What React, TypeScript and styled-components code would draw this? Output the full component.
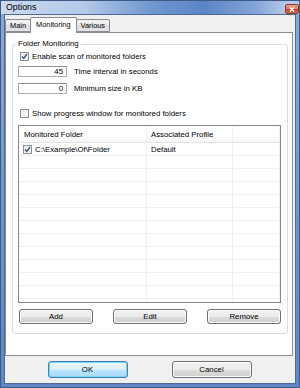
import styled, { createGlobalStyle } from 'styled-components'

const GlobalStyle = createGlobalStyle`
  html, body { margin: 0; padding: 0; background: #fff; }
  body { font-family: "Liberation Sans", Arial, sans-serif; }
  * { box-sizing: border-box; }
`

const FONT = '7.8px'

const Window = styled.div`
  width: 300px;
  height: 388px;
  display: flex;
  flex-direction: column;
  border: 1px solid #3d5a85;
  background: linear-gradient(180deg, #89abdc 0%, #6c92cf 60%, #5f86c6 100%);
`

const TitleBar = styled.div`
  height: 13px;
  flex: none;
  display: flex;
  align-items: center;
  justify-content: space-between;
  padding: 0 0 0 5px;
  background: linear-gradient(90deg, #cbdaef 0%, #b3c9e8 28%, #7098d0 50%, #5a85c6 68%, #82a4d6 85%, #b5cae8 96%);
`

const Title = styled.span`
  font-size: 8.8px;
  color: #000;
  line-height: 13px;
`

const CloseButton = styled.div`
  width: 14px;
  height: 10px;
  margin-top: 3px;
  border: 1px solid #8b3b2b;
  border-radius: 2px;
  background: linear-gradient(180deg, #eca58f 0%, #dc7a5e 45%, #c9472b 55%, #d86a4c 100%);
  display: flex;
  align-items: center;
  justify-content: center;
`

const Frame = styled.div`
  flex: 1;
  min-height: 0;
  display: flex;
  padding: 0 3px 3px 3px;
`

const Client = styled.div`
  flex: 1;
  min-height: 0;
  display: flex;
  flex-direction: column;
  border: 1px solid #4d6a96;
  background: #f0f0f0;
  padding: 2px 1px 0 0;
`

const TabRow = styled.div`
  display: flex;
  align-items: flex-end;
  height: 15px;
  flex: none;
  position: relative;
  z-index: 1;
`

const Tab = styled.div<{ $active?: boolean }>`
  height: ${(p) => (p.$active ? '16px' : '13px')};
  margin: ${(p) => (p.$active ? '0 -1px -1px -1px' : '0')};
  padding: ${(p) => (p.$active ? '2px 5px 0 5px' : '1px 4px 0 4px')};
  white-space: nowrap;
  border: 1px solid #898c95;
  border-bottom: ${(p) => (p.$active ? 'none' : '1px solid #898c95')};
  border-radius: 2px 2px 0 0;
  background: ${(p) => (p.$active ? '#fff' : 'linear-gradient(180deg, #f3f3f3 0%, #ebebeb 50%, #dedede 50%, #e4e4e4 100%)')};
  font-size: 7.4px;
  line-height: 10px;
  color: #000;
  position: relative;
  z-index: ${(p) => (p.$active ? 2 : 1)};
`

const Panel = styled.div`
  flex: 1;
  min-height: 0;
  display: flex;
  border: 1px solid #898c95;
  background: #fff;
  padding: 6px 4px 21px 6px;
  margin-right: 1px;
`

const Group = styled.fieldset`
  flex: 1;
  margin: 0;
  min-width: 0;
  min-height: 0;
  border: 1px solid #d5dfe5;
  border-radius: 3px;
  padding: 0 6px 9px 5px;
  display: flex;
`

const Legend = styled.legend`
  font-size: ${FONT};
  line-height: 10px;
  padding: 0 2px;
  margin-left: -2px;
  color: #000;
`

const GroupBody = styled.div`
  flex: 1;
  min-height: 0;
  display: flex;
  flex-direction: column;
`

const CheckRow = styled.div<{ $top: number }>`
  display: flex;
  align-items: center;
  gap: 3px;
  height: 10px;
  flex: none;
  margin-top: ${(p) => p.$top}px;
  padding-left: 2px;
  font-size: ${FONT};
  color: #000;
`

const Box = styled.span`
  width: 9px;
  height: 9px;
  flex: none;
  border: 1px solid #8e8f8f;
  background: linear-gradient(135deg, #dcdcdc 0%, #f4f4f4 60%, #ffffff 100%);
  box-shadow: inset 0 0 0 1px #f4f4f4;
  display: flex;
  align-items: center;
  justify-content: center;
`

const InputRow = styled.div<{ $top: number }>`
  display: flex;
  align-items: center;
  flex: none;
  margin-top: ${(p) => p.$top}px;
  height: 11px;
  font-size: ${FONT};
  color: #000;
`

const TextBox = styled.div`
  width: 49px;
  height: 11px;
  border: 1px solid #abadb3;
  border-top-color: #8e9199;
  background: #fff;
  text-align: right;
  padding-right: 3px;
  line-height: 9px;
  margin-right: 7px;
`

const List = styled.div`
  flex: 1;
  min-height: 0;
  margin-top: 7px;
  border: 1px solid #828790;
  background: #fff;
  overflow: hidden;
  display: flex;
  flex-direction: column;
`

const ListRow = styled.div<{ $header?: boolean }>`
  display: grid;
  grid-template-columns: 128px 86px 1fr;
  height: ${(p) => (p.$header ? '17px' : '13px')};
  flex: none;
  border-bottom: 1px solid ${(p) => (p.$header ? '#e2e3e5' : '#f0f0f0')};
  background: ${(p) => (p.$header ? 'linear-gradient(180deg, #ffffff 0%, #ffffff 50%, #f6f7f8 100%)' : '#fff')};
  font-size: ${FONT};
  color: #000;
`

const Cell = styled.div<{ $pad: number }>`
  display: flex;
  align-items: center;
  gap: 3px;
  padding-left: ${(p) => p.$pad}px;
  border-right: 1px solid #f0f0f0;
  white-space: nowrap;
  overflow: hidden;
`

const ButtonRow = styled.div`
  display: flex;
  flex: none;
  justify-content: space-between;
  margin-top: 6px;
  padding-left: 1px;
`

const Button = styled.div<{ $w: number; $h: number; $default?: boolean }>`
  width: ${(p) => p.$w}px;
  height: ${(p) => p.$h}px;
  border: 1px solid ${(p) => (p.$default ? '#3c7fb1' : '#707070')};
  border-radius: 3px;
  background: ${(p) =>
    p.$default
      ? 'linear-gradient(180deg, #eaf6fd 0%, #d9f0fc 50%, #bee6fd 50%, #a7d9f5 100%)'
      : 'linear-gradient(180deg, #f2f2f2 0%, #ebebeb 50%, #dddddd 50%, #cfcfcf 100%)'};
  box-shadow: ${(p) => (p.$default ? 'inset 0 0 0 1px #78d6f8' : 'inset 0 0 0 1px #fcfcfc')};
  display: flex;
  align-items: center;
  justify-content: center;
  font-size: ${FONT};
  color: #000;
`

const Footer = styled.div`
  height: 27px;
  flex: none;
  display: flex;
  justify-content: center;
  gap: 44px;
  padding-top: 5px;
`

const Check = () => (
  <svg width="7" height="7" viewBox="0 0 7 7">
    <path d="M1 3.5 L2.8 5.5 L6 1" fill="none" stroke="#3f5592" strokeWidth="1.4" />
  </svg>
)

const CheckBox = ({ checked }: { checked?: boolean }) => <Box>{checked && <Check />}</Box>

const rows = [
  { folder: 'C:\\Example\\Of\\Folder', profile: 'Default', checked: true },
  ...Array.from({ length: 12 }, () => null),
]

export default function App() {
  return (
    <>
      <GlobalStyle />
      <Window>
        <TitleBar>
          <Title>Options</Title>
          <CloseButton>
            <svg width="6" height="5" viewBox="0 0 6 5">
              <path d="M1 0.5 L5 4.5 M5 0.5 L1 4.5" stroke="#fff" strokeWidth="1.3" />
            </svg>
          </CloseButton>
        </TitleBar>
        <Frame>
          <Client>
            <TabRow>
              <Tab>Main</Tab>
              <Tab $active>Monitoring</Tab>
              <Tab>Various</Tab>
            </TabRow>
            <Panel>
              <Group>
                <Legend>Folder Monitoring</Legend>
                <GroupBody>
                  <CheckRow $top={2}>
                    <CheckBox checked />
                    Enable scan of monitored folders
                  </CheckRow>
                  <InputRow $top={5}>
                    <TextBox>45</TextBox>
                    Time interval in seconds
                  </InputRow>
                  <InputRow $top={6}>
                    <TextBox>0</TextBox>
                    Minimum size in KB
                  </InputRow>
                  <CheckRow $top={14}>
                    <CheckBox />
                    Show progress window for monitored folders
                  </CheckRow>
                  <List>
                    <ListRow $header>
                      <Cell $pad={5}>Monitored Folder</Cell>
                      <Cell $pad={4}>Associated Profile</Cell>
                      <Cell $pad={4} />
                    </ListRow>
                    {rows.map((r, i) => (
                      <ListRow key={i}>
                        <Cell $pad={4}>
                          {r && <CheckBox checked={r.checked} />}
                          {r?.folder}
                        </Cell>
                        <Cell $pad={4}>{r?.profile}</Cell>
                        <Cell $pad={4} />
                      </ListRow>
                    ))}
                  </List>
                  <ButtonRow>
                    <Button $w={74} $h={15}>Add</Button>
                    <Button $w={74} $h={15}>Edit</Button>
                    <Button $w={74} $h={15}>Remove</Button>
                  </ButtonRow>
                </GroupBody>
              </Group>
            </Panel>
            <Footer>
              <Button $w={80} $h={17} $default>OK</Button>
              <Button $w={80} $h={17}>Cancel</Button>
            </Footer>
          </Client>
        </Frame>
      </Window>
    </>
  )
}
